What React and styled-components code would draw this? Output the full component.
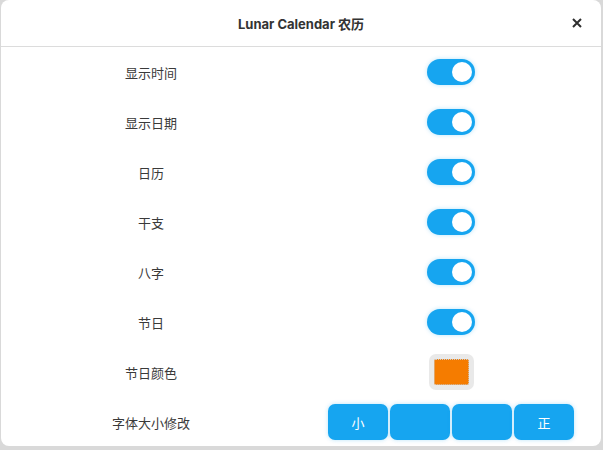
import React, { useState } from "react";
import styled, { createGlobalStyle } from "styled-components";

const GlobalStyle = createGlobalStyle`
  html, body {
    margin: 0;
    padding: 0;
    background: #d9d9d9;
    font-family: "Noto Sans", "Noto Sans CJK SC", sans-serif;
  }
`;

const Page = styled.div`
  width: 603px;
  height: 450px;
  padding: 0 2px 4px 1px;
  box-sizing: border-box;
`;

const Dialog = styled.div`
  width: 100%;
  height: 100%;
  background: #fff;
  border-radius: 8px;
  display: flex;
  flex-direction: column;
  overflow: hidden;
`;

const Header = styled.div`
  height: 46px;
  flex-shrink: 0;
  border-bottom: 1px solid #dcdcdc;
  display: flex;
  align-items: center;
  justify-content: center;
  position: relative;
`;

const Title = styled.div`
  font-family: "Inter", "Noto Sans CJK SC", sans-serif;
  font-weight: 700;
  font-size: 13px;
  color: #333;
`;

const Close = styled.button`
  position: absolute;
  right: 15px;
  top: 14px;
  width: 18px;
  height: 18px;
  border: none;
  background: none;
  padding: 0;
  display: flex;
  align-items: center;
  justify-content: center;
  cursor: pointer;
`;

const Body = styled.div`
  display: flex;
  flex-direction: column;
`;

const Row = styled.div`
  height: 50px;
  display: grid;
  grid-template-columns: 300px 300px;
  align-items: center;
`;

const Label = styled.div`
  text-align: center;
  font-size: 13px;
  color: #3a3a3a;
  font-family: "Noto Sans CJK SC", sans-serif;
`;

const Cell = styled.div`
  display: flex;
  justify-content: center;
`;

const Toggle = styled.button`
  width: 48px;
  height: 26px;
  border-radius: 13px;
  border: none;
  padding: 3px;
  background: ${({ on }) => (on ? "#16a5f0" : "#ccc")};
  box-shadow: 0 0 4px rgba(22, 165, 240, 0.3);
  display: flex;
  justify-content: ${({ on }) => (on ? "flex-end" : "flex-start")};
  cursor: pointer;
`;

const Knob = styled.span`
  width: 20px;
  height: 20px;
  border-radius: 50%;
  background: #fff;
`;

const Swatch = styled.div`
  width: 45px;
  height: 36px;
  box-sizing: border-box;
  border-radius: 7px;
  background: #e9e9e9;
  padding: 5px;
  display: flex;
`;

const SwatchColor = styled.div`
  flex: 1;
  background: ${({ color }) => color};
  border-radius: 2px;
  border: 1px dotted #ccc;
`;

const ButtonGroup = styled.div`
  display: flex;
  gap: 2px;
`;

const SizeButton = styled.button`
  width: 60px;
  height: 36px;
  border: none;
  border-radius: 7px;
  background: #16a5f0;
  color: #fff;
  font-size: 13px;
  font-family: "Noto Sans CJK SC", sans-serif;
  box-shadow: 0 0 4px rgba(22, 165, 240, 0.3);
  cursor: pointer;
`;

const toggles = ["显示时间", "显示日期", "日历", "干支", "八字", "节日"];

export default function App() {
  const [state, setState] = useState(toggles.map(() => true));

  return (
    <>
      <GlobalStyle />
      <Page>
        <Dialog>
          <Header>
            <Title>Lunar Calendar 农历</Title>
            <Close>
              <svg width="10" height="10" viewBox="0 0 10 10">
                <path d="M1 1L9 9M9 1L1 9" stroke="#2e2e2e" strokeWidth="2" />
              </svg>
            </Close>
          </Header>
          <Body>
            {toggles.map((t, i) => (
              <Row key={t}>
                <Label>{t}</Label>
                <Cell>
                  <Toggle
                    on={state[i]}
                    onClick={() =>
                      setState(state.map((v, j) => (j === i ? !v : v)))
                    }
                  >
                    <Knob />
                  </Toggle>
                </Cell>
              </Row>
            ))}
            <Row>
              <Label>节日颜色</Label>
              <Cell>
                <Swatch>
                  <SwatchColor color="#f57c00" />
                </Swatch>
              </Cell>
            </Row>
            <Row>
              <Label>字体大小修改</Label>
              <Cell>
                <ButtonGroup>
                  <SizeButton>小</SizeButton>
                  <SizeButton />
                  <SizeButton />
                  <SizeButton>正</SizeButton>
                </ButtonGroup>
              </Cell>
            </Row>
          </Body>
        </Dialog>
      </Page>
    </>
  );
}
